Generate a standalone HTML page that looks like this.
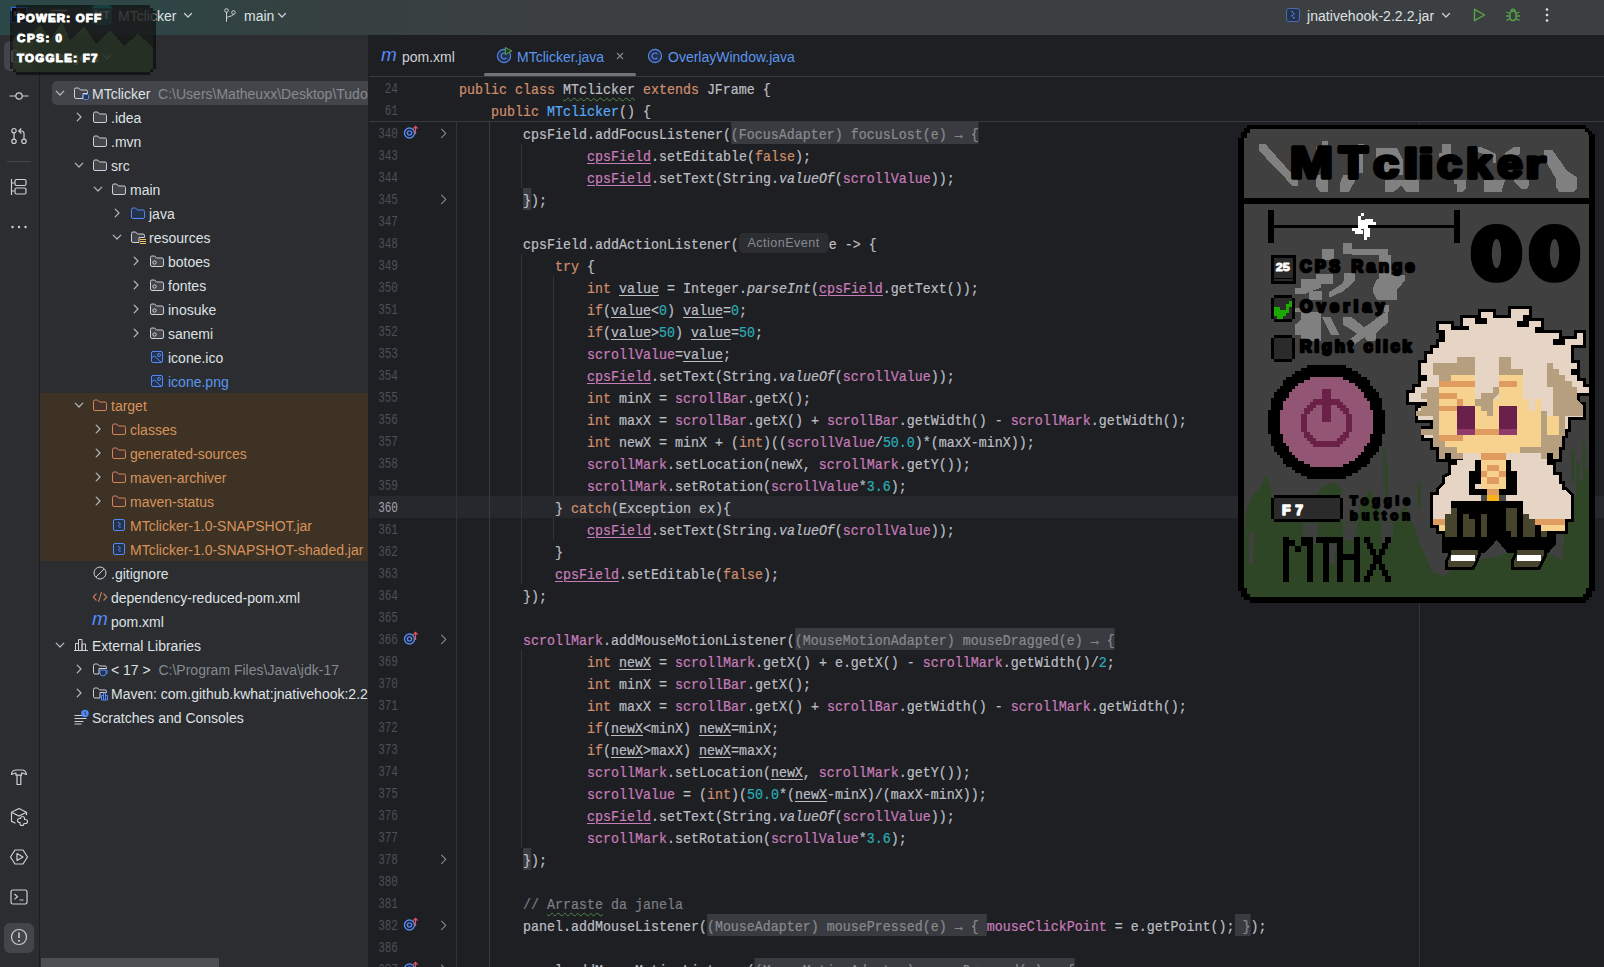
<!DOCTYPE html><html><head><meta charset="utf-8"><title>MTclicker</title><style>
*{margin:0;padding:0;box-sizing:border-box}
html,body{width:1604px;height:967px;overflow:hidden;background:#1e1f22}
body{position:relative;font-family:"Liberation Sans",sans-serif;font-size:14px;color:#dfe1e5}
.a{position:absolute}
#tb{left:0;top:0;width:1604px;height:35px;background:linear-gradient(90deg,#2c4848 0px,#2f4546 150px,#35403f 330px,#3c3f41 560px)}
#ts{left:0;top:35px;width:40px;height:932px;background:#2b2d30;border-right:1px solid #1e1f22}
#pp{left:40px;top:35px;width:329px;height:932px;background:#2b2d30;border-right:1px solid #1e1f22;overflow:hidden}
#ed{left:369px;top:35px;width:1235px;height:932px;background:#1e1f22;overflow:hidden}
.t{position:absolute;white-space:pre;line-height:24px;height:24px;margin-top:.5px}
.row{position:absolute;left:0;width:329px;height:24px}
.code{font-family:"Liberation Mono",monospace;font-size:14.400px;color:#bcbec4;white-space:pre;position:absolute;line-height:22px;height:22px;margin-top:1.700px;-webkit-text-stroke:.22px;transform:scaleX(.9258);transform-origin:0 50%}
.ln{font-family:"Liberation Mono",monospace;font-size:13.800px;color:#4b5059;position:absolute;width:60px;text-align:right;line-height:22px;height:22px;left:-31px;transform:scaleX(.8);transform-origin:100% 50%;margin-top:1.800px}
.k{color:#cf8e6d}.f{color:#c77dbb}.n{color:#2aacb8}.m{color:#56a8f5}.c{color:#7a7e85}
.u{text-decoration:underline;text-underline-offset:2px;text-decoration-thickness:1px}
.i{font-style:italic}
.h{background:#393b40;color:#868a91;display:inline-block;height:22px;margin-top:-1.5px;padding-top:1.5px;vertical-align:top}
.b{background:#393b40;display:inline-block;height:22px;margin-top:-1.5px;padding-top:1.5px;vertical-align:top}
.w{text-decoration:underline wavy #4d8a4a;text-decoration-thickness:1px;text-underline-offset:3px}
.ih{font-family:"Liberation Sans",sans-serif;font-size:13.600px;color:#868a91;background:#2b2d30;border-radius:5px;display:inline-block;height:20px;line-height:19px;vertical-align:top;margin-top:-0.500px;width:96.700px;text-align:center;margin-right:0.500px;-webkit-text-stroke:0;letter-spacing:.5px}
</style></head><body>
<div id="tb" class="a">
<div class="a" style="left:11px;top:7px;width:16px;height:16px;border:1px solid #2f6bd8;background:#0d0f14"></div>
<div class="a" style="left:14px;top:10px;width:5px;height:7px;color:#fff;font:bold 7px/7px 'Liberation Sans',sans-serif">IJ</div>
<svg class="a" style="left:50px;top:7px" width="18" height="16" viewBox="0 0 18 16" fill="none"><path d="M1 3.500h16M1 8.500h16M1 13.500h16" stroke="#ced0d6" stroke-width="1.300"/></svg>
<div class="a" style="left:92px;top:5px;width:20px;height:20px;border-radius:4px;background:linear-gradient(135deg,#3a8f8c,#2f7f86);color:#fff;font:bold 10.500px/20px 'Liberation Sans',sans-serif;text-align:center;letter-spacing:0.300px">MT</div>
<div class="t" style="left:118px;top:3px;color:#dfe1e5">MTclicker</div>
<svg class="a" style="left:180px;top:7px" width="16" height="16" viewBox="0 0 16 16" fill="none"><path d="M4.500 6.500l3.500 3.500 3.500-3.500" stroke="#ced0d6" stroke-width="1.200" stroke-linecap="round" stroke-linejoin="round"/></svg>
<svg class="a" style="left:222px;top:7px" width="16" height="16" viewBox="0 0 16 16" fill="none"><circle cx="4.500" cy="3.500" r="1.800" stroke="#ced0d6"/><circle cx="11.500" cy="5.500" r="1.800" stroke="#ced0d6"/><path d="M4.500 5.300v9M4.500 11.500c0-3 7-1.500 7-4.200" stroke="#ced0d6" stroke-linecap="round"/></svg>
<div class="t" style="left:244px;top:3px;color:#dfe1e5">main</div>
<svg class="a" style="left:274px;top:7px" width="16" height="16" viewBox="0 0 16 16" fill="none"><path d="M4.500 6.500l3.500 3.500 3.500-3.500" stroke="#ced0d6" stroke-width="1.200" stroke-linecap="round" stroke-linejoin="round"/></svg>
<svg class="a" style="left:1285px;top:7px" width="16" height="16" viewBox="0 0 16 16" fill="none"><rect x="1.500" y="1.500" width="13" height="13" rx="2.500" stroke="#4a6bb0" fill="#25324d"/><path d="M6.500 4h1.500v1.500h-1.500zM8 6h1.500v1.500H8zM6.500 8h1.500v1.500h-1.500zM8 10h1.500v1.500H8z" fill="#548af7"/></svg>
<div class="t" style="left:1307px;top:3px;color:#dfe1e5;letter-spacing:0.050px">jnativehook-2.2.2.jar</div>
<svg class="a" style="left:1438px;top:7px" width="16" height="16" viewBox="0 0 16 16" fill="none"><path d="M4.500 6.500l3.500 3.500 3.500-3.500" stroke="#ced0d6" stroke-width="1.200" stroke-linecap="round" stroke-linejoin="round"/></svg>
<svg class="a" style="left:1471px;top:7px" width="16" height="16" viewBox="0 0 16 16" fill="none"><path d="M3.500 2.300l10 5.700-10 5.700z" stroke="#57a64a" stroke-width="1.400" stroke-linejoin="round"/></svg>
<svg class="a" style="left:1505px;top:7px" width="16" height="16" viewBox="0 0 16 16" fill="none"><rect x="5" y="4" width="6" height="9.500" rx="3" stroke="#57a64a" stroke-width="1.300"/><path d="M6 4.200a2 2 0 0 1 4 0M1.500 5l3.300 1.500M14.500 5l-3.300 1.500M1 9h4M15 9h-4M1.500 13.500l3.500-2M14.500 13.500l-3.500-2" stroke="#57a64a" stroke-width="1.300"/></svg>
<svg class="a" style="left:1539px;top:7px" width="16" height="16" viewBox="0 0 16 16" fill="none"><circle cx="8" cy="2.500" r="1.300" fill="#dfe1e5"/><circle cx="8" cy="8" r="1.300" fill="#dfe1e5"/><circle cx="8" cy="13.500" r="1.300" fill="#dfe1e5"/></svg>
</div>
<div id="ts" class="a">
<div class="a" style="left:4px;top:6px;width:30px;height:30px;border-radius:6px;background:#43454a"></div>
<svg class="a" style="left:9px;top:11px" width="20" height="20" viewBox="0 0 20 20" fill="none" stroke="#ced0d6" stroke-width="1.200"><path d="M3 6a1.500 1.500 0 0 1 1.500-1.500h3l2 2.200h6a1.500 1.500 0 0 1 1.500 1.500v6.300a1.500 1.500 0 0 1-1.500 1.500h-11a1.500 1.500 0 0 1-1.500-1.500z"/></svg>
<svg class="a" style="left:9px;top:51px" width="20" height="20" viewBox="0 0 20 20" fill="none" stroke="#ced0d6" stroke-width="1.200"><circle cx="10" cy="10" r="3.200"/><path d="M0.500 10h6.300M13.200 10h6.300"/></svg>
<svg class="a" style="left:9px;top:91px" width="20" height="20" viewBox="0 0 20 20" fill="none" stroke="#ced0d6" stroke-width="1.200"><circle cx="5" cy="4.700" r="2.200"/><circle cx="5" cy="15.300" r="2.200"/><circle cx="15" cy="15.300" r="2.200"/><path d="M5 7v6M15 13v-5.500a2.500 2.500 0 0 0-2.500-2.500h-2.500M12.300 2.500l-2.500 2.500 2.500 2.500"/></svg>
<div class="a" style="left:7px;top:126px;width:24px;height:1px;background:#43454a"></div>
<svg class="a" style="left:9px;top:142px" width="20" height="20" viewBox="0 0 20 20" fill="none" stroke="#ced0d6" stroke-width="1.200"><path d="M2.500 2v16M2.500 6h3M2.500 14h3"/><rect x="6" y="2.500" width="11" height="6" rx="1.500"/><rect x="6" y="11" width="11" height="6" rx="1.500"/></svg>
<svg class="a" style="left:9px;top:182px" width="20" height="20" viewBox="0 0 20 20" fill="none" stroke="#ced0d6" stroke-width="1.200"><circle cx="3.500" cy="10" r="1.200" fill="#ced0d6" stroke="none"/><circle cx="10" cy="10" r="1.200" fill="#ced0d6" stroke="none"/><circle cx="16.500" cy="10" r="1.200" fill="#ced0d6" stroke="none"/></svg>
<svg class="a" style="left:9px;top:732px" width="20" height="20" viewBox="0 0 20 20" fill="none" stroke="#ced0d6" stroke-width="1.200"><path d="M2.500 7.500c0-2.800 2-4.500 5-4.500h5.500c2.500 0 4 1.800 4.500 4.500l-3.500-1.300h-1.500v2h-5.500v-2h-1.300z M8 8.200v9.300h3.800v-9.300" stroke-linejoin="round"/></svg>
<svg class="a" style="left:9px;top:772px" width="20" height="20" viewBox="0 0 20 20" fill="none" stroke="#ced0d6" stroke-width="1.200"><path d="M10 1.500l7.500 3.800v3M10 1.500l-7.500 3.800v9l4 2M2.500 5.300l7.500 3.700 7.500-3.700"/><path d="M13.500 9.500a2 2 0 0 1 2 2v1h1a2 2 0 0 1 0 4h-1.500a2 2 0 0 1-2 2 2 2 0 0 1-2-2v-1h-0.500a2 2 0 0 1 0-4h1v-0.500a2 2 0 0 1 2-1.500z" stroke-width="1.100"/></svg>
<svg class="a" style="left:9px;top:812px" width="20" height="20" viewBox="0 0 20 20" fill="none" stroke="#ced0d6" stroke-width="1.200"><path d="M6 3h8l4.500 7-4.500 7h-8l-4.500-7z M8 6.500l6 3.500-6 3.500z" stroke-linejoin="round"/></svg>
<svg class="a" style="left:9px;top:852px" width="20" height="20" viewBox="0 0 20 20" fill="none" stroke="#ced0d6" stroke-width="1.200"><rect x="2" y="3" width="16" height="14" rx="1.800"/><path d="M5.500 7l3 2.700-3 2.700M10.500 13h4"/></svg>
<div class="a" style="left:4px;top:888px;width:30px;height:30px;border-radius:6px;background:#43454a"></div>
<svg class="a" style="left:9px;top:892px" width="20" height="20" viewBox="0 0 20 20" fill="none" stroke="#ced0d6" stroke-width="1.200"><circle cx="10" cy="10" r="7.500"/><path d="M10 5.500v5.500" stroke-width="1.500"/><circle cx="10" cy="13.800" r="1" fill="#ced0d6" stroke="none"/></svg>
</div>
<div id="pp" class="a">
<div class="t" style="left:13px;top:10px;font-weight:bold;color:#dfe1e5;font-size:13.500px">Project</div>
<div class="a" style="left:59px;top:14px;width:16px;height:16px"><svg width="16" height="16" viewBox="0 0 16 16" fill="none" style="position:absolute;left:0;top:0"><path d="M4.200 6.200l3.800 3.800 3.800-3.800" stroke="#b4b8bf" stroke-width="1.200" stroke-linecap="round" stroke-linejoin="round"/></svg></div>
<div class="a" style="left:0;top:358px;width:329px;height:168px;background:#3d3223"></div>
<div class="a" style="left:12px;top:46px;width:330px;height:24px;background:#43454a;border-radius:5px"></div>
<div class="a" style="left:12px;top:50px;width:16px;height:16px"><svg width="16" height="16" viewBox="0 0 16 16" fill="none" style="position:absolute;left:0;top:0"><path d="M4.200 6.200l3.800 3.800 3.800-3.800" stroke="#b4b8bf" stroke-width="1.200" stroke-linecap="round" stroke-linejoin="round"/></svg></div>
<div class="a" style="left:33px;top:50px;width:17px;height:17px"><svg width="16" height="16" viewBox="0 0 16 16" fill="none" style="position:absolute;left:0;top:0"><path d="M1.5 4.5a1.5 1.5 0 0 1 1.5-1.5h2.6l1.9 2h5.5a1.5 1.5 0 0 1 1.5 1.5v2h-4.5v5h-7a1.5 1.5 0 0 1-1.5-1.5z" stroke="#ced0d6" fill="#43454a"/><rect x="10.5" y="9.5" width="5" height="5" rx="1.2" stroke="#548af7" fill="#25324d"/></svg></div>
<div class="t" style="left:52px;top:46px;color:#dfe1e5;">MTclicker<span style="color:#868a91">  C:\Users\Matheuxx\Desktop\Tudo\</span></div>
<div class="a" style="left:31px;top:74px;width:16px;height:16px"><svg width="16" height="16" viewBox="0 0 16 16" fill="none" style="position:absolute;left:0;top:0"><path d="M6.200 4.200l3.800 3.800-3.800 3.800" stroke="#b4b8bf" stroke-width="1.200" stroke-linecap="round" stroke-linejoin="round"/></svg></div>
<div class="a" style="left:52px;top:74px;width:17px;height:17px"><svg width="16" height="16" viewBox="0 0 16 16" fill="none" style="position:absolute;left:0;top:0"><path d="M1.5 4.5a1.5 1.5 0 0 1 1.5-1.5h2.6l1.9 2h5.5a1.5 1.5 0 0 1 1.5 1.5v5.5a1.5 1.5 0 0 1-1.5 1.5h-10a1.5 1.5 0 0 1-1.5-1.5z" stroke="#ced0d6" fill="#43454a" stroke-width="1"/></svg></div>
<div class="t" style="left:71px;top:70px;">.idea</div>
<div class="a" style="left:52px;top:98px;width:17px;height:17px"><svg width="16" height="16" viewBox="0 0 16 16" fill="none" style="position:absolute;left:0;top:0"><path d="M1.5 4.5a1.5 1.5 0 0 1 1.5-1.5h2.6l1.9 2h5.5a1.5 1.5 0 0 1 1.5 1.5v5.5a1.5 1.5 0 0 1-1.5 1.5h-10a1.5 1.5 0 0 1-1.5-1.5z" stroke="#ced0d6" fill="#43454a" stroke-width="1"/></svg></div>
<div class="t" style="left:71px;top:94px;">.mvn</div>
<div class="a" style="left:31px;top:122px;width:16px;height:16px"><svg width="16" height="16" viewBox="0 0 16 16" fill="none" style="position:absolute;left:0;top:0"><path d="M4.200 6.200l3.800 3.800 3.800-3.800" stroke="#b4b8bf" stroke-width="1.200" stroke-linecap="round" stroke-linejoin="round"/></svg></div>
<div class="a" style="left:52px;top:122px;width:17px;height:17px"><svg width="16" height="16" viewBox="0 0 16 16" fill="none" style="position:absolute;left:0;top:0"><path d="M1.5 4.5a1.5 1.5 0 0 1 1.5-1.5h2.6l1.9 2h5.5a1.5 1.5 0 0 1 1.5 1.5v5.5a1.5 1.5 0 0 1-1.5 1.5h-10a1.5 1.5 0 0 1-1.5-1.5z" stroke="#ced0d6" fill="#43454a" stroke-width="1"/></svg></div>
<div class="t" style="left:71px;top:118px;">src</div>
<div class="a" style="left:50px;top:146px;width:16px;height:16px"><svg width="16" height="16" viewBox="0 0 16 16" fill="none" style="position:absolute;left:0;top:0"><path d="M4.200 6.200l3.800 3.800 3.800-3.800" stroke="#b4b8bf" stroke-width="1.200" stroke-linecap="round" stroke-linejoin="round"/></svg></div>
<div class="a" style="left:71px;top:146px;width:17px;height:17px"><svg width="16" height="16" viewBox="0 0 16 16" fill="none" style="position:absolute;left:0;top:0"><path d="M1.5 4.5a1.5 1.5 0 0 1 1.5-1.5h2.6l1.9 2h5.5a1.5 1.5 0 0 1 1.5 1.5v5.5a1.5 1.5 0 0 1-1.5 1.5h-10a1.5 1.5 0 0 1-1.5-1.5z" stroke="#ced0d6" fill="#43454a" stroke-width="1"/></svg></div>
<div class="t" style="left:90px;top:142px;">main</div>
<div class="a" style="left:69px;top:170px;width:16px;height:16px"><svg width="16" height="16" viewBox="0 0 16 16" fill="none" style="position:absolute;left:0;top:0"><path d="M6.200 4.200l3.800 3.800-3.800 3.800" stroke="#b4b8bf" stroke-width="1.200" stroke-linecap="round" stroke-linejoin="round"/></svg></div>
<div class="a" style="left:90px;top:170px;width:17px;height:17px"><svg width="16" height="16" viewBox="0 0 16 16" fill="none" style="position:absolute;left:0;top:0"><path d="M1.5 4.5a1.5 1.5 0 0 1 1.5-1.5h2.6l1.9 2h5.5a1.5 1.5 0 0 1 1.5 1.5v5.5a1.5 1.5 0 0 1-1.5 1.5h-10a1.5 1.5 0 0 1-1.5-1.5z" stroke="#548af7" fill="#25324d" stroke-width="1"/></svg></div>
<div class="t" style="left:109px;top:166px;">java</div>
<div class="a" style="left:69px;top:194px;width:16px;height:16px"><svg width="16" height="16" viewBox="0 0 16 16" fill="none" style="position:absolute;left:0;top:0"><path d="M4.200 6.200l3.800 3.800 3.800-3.800" stroke="#b4b8bf" stroke-width="1.200" stroke-linecap="round" stroke-linejoin="round"/></svg></div>
<div class="a" style="left:90px;top:194px;width:17px;height:17px"><svg width="16" height="16" viewBox="0 0 16 16" fill="none" style="position:absolute;left:0;top:0"><path d="M1.5 4.5a1.5 1.5 0 0 1 1.5-1.5h2.6l1.9 2h5.5a1.5 1.5 0 0 1 1.5 1.5v2h-5.5v5h-6a1.5 1.5 0 0 1-1.5-1.5z" stroke="#ced0d6" fill="#43454a"/><path d="M10 10.5h6M10 12.5h6M10 14.5h6" stroke="#f2c55c" stroke-width="1"/></svg></div>
<div class="t" style="left:109px;top:190px;">resources</div>
<div class="a" style="left:88px;top:218px;width:16px;height:16px"><svg width="16" height="16" viewBox="0 0 16 16" fill="none" style="position:absolute;left:0;top:0"><path d="M6.200 4.200l3.800 3.800-3.800 3.800" stroke="#b4b8bf" stroke-width="1.200" stroke-linecap="round" stroke-linejoin="round"/></svg></div>
<div class="a" style="left:109px;top:218px;width:17px;height:17px"><svg width="16" height="16" viewBox="0 0 16 16" fill="none" style="position:absolute;left:0;top:0"><path d="M1.5 4.5a1.5 1.5 0 0 1 1.5-1.5h2.6l1.9 2h5.5a1.5 1.5 0 0 1 1.5 1.5v5.5a1.5 1.5 0 0 1-1.5 1.5h-10a1.5 1.5 0 0 1-1.5-1.5z" stroke="#ced0d6" fill="#43454a" stroke-width="1"/><circle cx="5.5" cy="9.5" r="1.7" stroke="#ced0d6"/></svg></div>
<div class="t" style="left:128px;top:214px;">botoes</div>
<div class="a" style="left:88px;top:242px;width:16px;height:16px"><svg width="16" height="16" viewBox="0 0 16 16" fill="none" style="position:absolute;left:0;top:0"><path d="M6.200 4.200l3.800 3.800-3.800 3.800" stroke="#b4b8bf" stroke-width="1.200" stroke-linecap="round" stroke-linejoin="round"/></svg></div>
<div class="a" style="left:109px;top:242px;width:17px;height:17px"><svg width="16" height="16" viewBox="0 0 16 16" fill="none" style="position:absolute;left:0;top:0"><path d="M1.5 4.5a1.5 1.5 0 0 1 1.5-1.5h2.6l1.9 2h5.5a1.5 1.5 0 0 1 1.5 1.5v5.5a1.5 1.5 0 0 1-1.5 1.5h-10a1.5 1.5 0 0 1-1.5-1.5z" stroke="#ced0d6" fill="#43454a" stroke-width="1"/><circle cx="5.5" cy="9.5" r="1.7" stroke="#ced0d6"/></svg></div>
<div class="t" style="left:128px;top:238px;">fontes</div>
<div class="a" style="left:88px;top:266px;width:16px;height:16px"><svg width="16" height="16" viewBox="0 0 16 16" fill="none" style="position:absolute;left:0;top:0"><path d="M6.200 4.200l3.800 3.800-3.800 3.800" stroke="#b4b8bf" stroke-width="1.200" stroke-linecap="round" stroke-linejoin="round"/></svg></div>
<div class="a" style="left:109px;top:266px;width:17px;height:17px"><svg width="16" height="16" viewBox="0 0 16 16" fill="none" style="position:absolute;left:0;top:0"><path d="M1.5 4.5a1.5 1.5 0 0 1 1.5-1.5h2.6l1.9 2h5.5a1.5 1.5 0 0 1 1.5 1.5v5.5a1.5 1.5 0 0 1-1.5 1.5h-10a1.5 1.5 0 0 1-1.5-1.5z" stroke="#ced0d6" fill="#43454a" stroke-width="1"/><circle cx="5.5" cy="9.5" r="1.7" stroke="#ced0d6"/></svg></div>
<div class="t" style="left:128px;top:262px;">inosuke</div>
<div class="a" style="left:88px;top:290px;width:16px;height:16px"><svg width="16" height="16" viewBox="0 0 16 16" fill="none" style="position:absolute;left:0;top:0"><path d="M6.200 4.200l3.800 3.800-3.800 3.800" stroke="#b4b8bf" stroke-width="1.200" stroke-linecap="round" stroke-linejoin="round"/></svg></div>
<div class="a" style="left:109px;top:290px;width:17px;height:17px"><svg width="16" height="16" viewBox="0 0 16 16" fill="none" style="position:absolute;left:0;top:0"><path d="M1.5 4.5a1.5 1.5 0 0 1 1.5-1.5h2.6l1.9 2h5.5a1.5 1.5 0 0 1 1.5 1.5v5.5a1.5 1.5 0 0 1-1.5 1.5h-10a1.5 1.5 0 0 1-1.5-1.5z" stroke="#ced0d6" fill="#43454a" stroke-width="1"/><circle cx="5.5" cy="9.5" r="1.7" stroke="#ced0d6"/></svg></div>
<div class="t" style="left:128px;top:286px;">sanemi</div>
<div class="a" style="left:109px;top:314px;width:17px;height:17px"><svg width="16" height="16" viewBox="0 0 16 16" fill="none" style="position:absolute;left:0;top:0"><rect x="2.5" y="2.5" width="11" height="11" rx="1.5" stroke="#548af7" fill="#25324d"/><circle cx="10" cy="6" r="1.5" stroke="#548af7"/><path d="M2.5 8.5l3-1.5 7 6.5" stroke="#548af7"/></svg></div>
<div class="t" style="left:128px;top:310px;">icone.ico</div>
<div class="a" style="left:109px;top:338px;width:17px;height:17px"><svg width="16" height="16" viewBox="0 0 16 16" fill="none" style="position:absolute;left:0;top:0"><rect x="2.5" y="2.5" width="11" height="11" rx="1.5" stroke="#548af7" fill="#25324d"/><circle cx="10" cy="6" r="1.5" stroke="#548af7"/><path d="M2.5 8.5l3-1.5 7 6.5" stroke="#548af7"/></svg></div>
<div class="t" style="left:128px;top:334px;color:#5a96ee;">icone.png</div>
<div class="a" style="left:31px;top:362px;width:16px;height:16px"><svg width="16" height="16" viewBox="0 0 16 16" fill="none" style="position:absolute;left:0;top:0"><path d="M4.200 6.200l3.800 3.800 3.800-3.800" stroke="#b4b8bf" stroke-width="1.200" stroke-linecap="round" stroke-linejoin="round"/></svg></div>
<div class="a" style="left:52px;top:362px;width:17px;height:17px"><svg width="16" height="16" viewBox="0 0 16 16" fill="none" style="position:absolute;left:0;top:0"><path d="M1.5 4.5a1.5 1.5 0 0 1 1.5-1.5h2.6l1.9 2h5.5a1.5 1.5 0 0 1 1.5 1.5v5.5a1.5 1.5 0 0 1-1.5 1.5h-10a1.5 1.5 0 0 1-1.5-1.5z" stroke="#d3855a" fill="#45302b" stroke-width="1"/></svg></div>
<div class="t" style="left:71px;top:358px;color:#d8925e;">target</div>
<div class="a" style="left:50px;top:386px;width:16px;height:16px"><svg width="16" height="16" viewBox="0 0 16 16" fill="none" style="position:absolute;left:0;top:0"><path d="M6.200 4.200l3.800 3.800-3.800 3.800" stroke="#b4b8bf" stroke-width="1.200" stroke-linecap="round" stroke-linejoin="round"/></svg></div>
<div class="a" style="left:71px;top:386px;width:17px;height:17px"><svg width="16" height="16" viewBox="0 0 16 16" fill="none" style="position:absolute;left:0;top:0"><path d="M1.5 4.5a1.5 1.5 0 0 1 1.5-1.5h2.6l1.9 2h5.5a1.5 1.5 0 0 1 1.5 1.5v5.5a1.5 1.5 0 0 1-1.5 1.5h-10a1.5 1.5 0 0 1-1.5-1.5z" stroke="#d3855a" fill="#45302b" stroke-width="1"/></svg></div>
<div class="t" style="left:90px;top:382px;color:#d8925e;">classes</div>
<div class="a" style="left:50px;top:410px;width:16px;height:16px"><svg width="16" height="16" viewBox="0 0 16 16" fill="none" style="position:absolute;left:0;top:0"><path d="M6.200 4.200l3.800 3.800-3.800 3.800" stroke="#b4b8bf" stroke-width="1.200" stroke-linecap="round" stroke-linejoin="round"/></svg></div>
<div class="a" style="left:71px;top:410px;width:17px;height:17px"><svg width="16" height="16" viewBox="0 0 16 16" fill="none" style="position:absolute;left:0;top:0"><path d="M1.5 4.5a1.5 1.5 0 0 1 1.5-1.5h2.6l1.9 2h5.5a1.5 1.5 0 0 1 1.5 1.5v5.5a1.5 1.5 0 0 1-1.5 1.5h-10a1.5 1.5 0 0 1-1.5-1.5z" stroke="#d3855a" fill="#45302b" stroke-width="1"/></svg></div>
<div class="t" style="left:90px;top:406px;color:#d8925e;">generated-sources</div>
<div class="a" style="left:50px;top:434px;width:16px;height:16px"><svg width="16" height="16" viewBox="0 0 16 16" fill="none" style="position:absolute;left:0;top:0"><path d="M6.200 4.200l3.800 3.800-3.800 3.800" stroke="#b4b8bf" stroke-width="1.200" stroke-linecap="round" stroke-linejoin="round"/></svg></div>
<div class="a" style="left:71px;top:434px;width:17px;height:17px"><svg width="16" height="16" viewBox="0 0 16 16" fill="none" style="position:absolute;left:0;top:0"><path d="M1.5 4.5a1.5 1.5 0 0 1 1.5-1.5h2.6l1.9 2h5.5a1.5 1.5 0 0 1 1.5 1.5v5.5a1.5 1.5 0 0 1-1.5 1.5h-10a1.5 1.5 0 0 1-1.5-1.5z" stroke="#d3855a" fill="#45302b" stroke-width="1"/></svg></div>
<div class="t" style="left:90px;top:430px;color:#d8925e;">maven-archiver</div>
<div class="a" style="left:50px;top:458px;width:16px;height:16px"><svg width="16" height="16" viewBox="0 0 16 16" fill="none" style="position:absolute;left:0;top:0"><path d="M6.200 4.200l3.800 3.800-3.800 3.800" stroke="#b4b8bf" stroke-width="1.200" stroke-linecap="round" stroke-linejoin="round"/></svg></div>
<div class="a" style="left:71px;top:458px;width:17px;height:17px"><svg width="16" height="16" viewBox="0 0 16 16" fill="none" style="position:absolute;left:0;top:0"><path d="M1.5 4.5a1.5 1.5 0 0 1 1.5-1.5h2.6l1.9 2h5.5a1.5 1.5 0 0 1 1.5 1.5v5.5a1.5 1.5 0 0 1-1.5 1.5h-10a1.5 1.5 0 0 1-1.5-1.5z" stroke="#d3855a" fill="#45302b" stroke-width="1"/></svg></div>
<div class="t" style="left:90px;top:454px;color:#d8925e;">maven-status</div>
<div class="a" style="left:71px;top:482px;width:17px;height:17px"><svg width="16" height="16" viewBox="0 0 16 16" fill="none" style="position:absolute;left:0;top:0"><rect x="2.5" y="2.5" width="11" height="11" rx="1.5" stroke="#548af7" fill="#25324d"/><path d="M7 5h1.3v1.3H7zM8.3 6.6h1.3v1.3H8.3zM7 8.2h1.3v1.3H7zM8.3 9.8h1.3v1.3H8.3z" fill="#548af7"/></svg></div>
<div class="t" style="left:90px;top:478px;color:#d8925e;">MTclicker-1.0-SNAPSHOT.jar</div>
<div class="a" style="left:71px;top:506px;width:17px;height:17px"><svg width="16" height="16" viewBox="0 0 16 16" fill="none" style="position:absolute;left:0;top:0"><rect x="2.5" y="2.5" width="11" height="11" rx="1.5" stroke="#548af7" fill="#25324d"/><path d="M7 5h1.3v1.3H7zM8.3 6.6h1.3v1.3H8.3zM7 8.2h1.3v1.3H7zM8.3 9.8h1.3v1.3H8.3z" fill="#548af7"/></svg></div>
<div class="t" style="left:90px;top:502px;color:#d8925e;">MTclicker-1.0-SNAPSHOT-shaded.jar</div>
<div class="a" style="left:52px;top:530px;width:17px;height:17px"><svg width="16" height="16" viewBox="0 0 16 16" fill="none" style="position:absolute;left:0;top:0"><circle cx="8" cy="8" r="6" stroke="#ced0d6"/><path d="M4 12L12 4" stroke="#ced0d6"/></svg></div>
<div class="t" style="left:71px;top:526px;">.gitignore</div>
<div class="a" style="left:52px;top:554px;width:17px;height:17px"><svg width="16" height="16" viewBox="0 0 16 16" fill="none" style="position:absolute;left:0;top:0"><path d="M4.5 4.5L1.2 8l3.3 3.5M11.5 4.5L14.8 8l-3.3 3.5M9.6 3L6.4 13" stroke="#c77d55" stroke-width="1.1"/></svg></div>
<div class="t" style="left:71px;top:550px;">dependency-reduced-pom.xml</div>
<div class="a" style="left:52px;top:578px;width:17px;height:17px"><span style="position:absolute;left:0;top:-6px;font:italic 19px/24px 'Liberation Sans',sans-serif;color:#548af7">m</span></div>
<div class="t" style="left:71px;top:574px;">pom.xml</div>
<div class="a" style="left:12px;top:602px;width:16px;height:16px"><svg width="16" height="16" viewBox="0 0 16 16" fill="none" style="position:absolute;left:0;top:0"><path d="M4.200 6.200l3.800 3.800 3.800-3.800" stroke="#b4b8bf" stroke-width="1.200" stroke-linecap="round" stroke-linejoin="round"/></svg></div>
<div class="a" style="left:33px;top:602px;width:17px;height:17px"><svg width="16" height="16" viewBox="0 0 16 16" fill="none" style="position:absolute;left:0;top:0"><path d="M2.5 13.5v-7h3v7zM5.5 13.5v-11h3.5v11zM9 13.5v-6.500h3.5v6.5zM1 13.5h14" stroke="#ced0d6"/></svg></div>
<div class="t" style="left:52px;top:598px;">External Libraries</div>
<div class="a" style="left:31px;top:626px;width:16px;height:16px"><svg width="16" height="16" viewBox="0 0 16 16" fill="none" style="position:absolute;left:0;top:0"><path d="M6.200 4.200l3.800 3.800-3.800 3.800" stroke="#b4b8bf" stroke-width="1.200" stroke-linecap="round" stroke-linejoin="round"/></svg></div>
<div class="a" style="left:52px;top:626px;width:17px;height:17px"><svg width="16" height="16" viewBox="0 0 16 16" fill="none" style="position:absolute;left:0;top:0"><path d="M1.5 4.500a1.5 1.5 0 0 1 1.5-1.5h2.6l1.9 2h5.5a1.5 1.5 0 0 1 1.5 1.5v1h-7.5v5.5h-4a1.5 1.5 0 0 1-1.5-1.500z" stroke="#ced0d6"/><path d="M8 9h6v3a3 3 0 0 1-6 0zM14 9.800h1.200a1 1 0 0 1 0 2.400h-1.200" stroke="#548af7" fill="#25324d"/></svg></div>
<div class="t" style="left:71px;top:622px;">&lt; 17 &gt;<span style="color:#868a91">  C:\Program Files\Java\jdk-17</span></div>
<div class="a" style="left:31px;top:650px;width:16px;height:16px"><svg width="16" height="16" viewBox="0 0 16 16" fill="none" style="position:absolute;left:0;top:0"><path d="M6.200 4.200l3.800 3.800-3.800 3.800" stroke="#b4b8bf" stroke-width="1.200" stroke-linecap="round" stroke-linejoin="round"/></svg></div>
<div class="a" style="left:52px;top:650px;width:17px;height:17px"><svg width="16" height="16" viewBox="0 0 16 16" fill="none" style="position:absolute;left:0;top:0"><path d="M1.5 4.500a1.5 1.5 0 0 1 1.5-1.5h2.6l1.9 2h5.5a1.5 1.5 0 0 1 1.5 1.5v1h-6.500v5.5h-5a1.500 1.500 0 0 1-1.500-1.500z" stroke="#ced0d6"/><path d="M9.5 15v-4.500h2v4.500zM11.500 15v-7h2v7zM13.500 15v-4.500h2v4.500z" stroke="#548af7" fill="#25324d"/></svg></div>
<div class="t" style="left:71px;top:646px;">Maven: com.github.kwhat:jnativehook:2.2.2</div>
<div class="a" style="left:33px;top:674px;width:17px;height:17px"><svg width="17" height="17" viewBox="0 0 17 17" fill="none" style="position:absolute;left:0;top:0"><path d="M1.500 6.500h8M1.500 9.500h12M1.500 12.500h9M1.500 15h7" stroke="#ced0d6" stroke-width="1.200"/><circle cx="12" cy="4.500" r="3.700" fill="#548af7"/><path d="M12 2.500v2.300l1.500 0.900" stroke="#2b2d30" stroke-width="1"/></svg></div>
<div class="t" style="left:52px;top:670px;">Scratches and Consoles</div>
<div class="a" style="left:1px;top:923px;width:178px;height:9px;background:#4d4e51"></div>
</div>
<div id="ed" class="a">
<div class="a" style="left:0;top:41px;width:1235px;height:1px;background:#393b40"></div>
<span class="a" style="left:12px;top:8px;font:italic 19px/24px 'Liberation Sans',sans-serif;color:#548af7">m</span>
<div class="t" style="left:33px;top:9px;color:#ced0d6">pom.xml</div>
<svg class="a" style="left:126px;top:12px" width="18" height="18" viewBox="0 0 18 18" fill="none"><circle cx="9" cy="9" r="6.600" stroke="#548af7" fill="#25324d" stroke-width="1.100"/><path d="M11.300 7a3 3 0 1 0 0 4" stroke="#548af7" stroke-width="1.200"/><path d="M10.300 0.500l6.500 3.500-6.500 3.500z" fill="#253627" stroke="#57a64a" stroke-width="1"/></svg>
<div class="t" style="left:148px;top:9px;color:#5a96ee">MTclicker.java</div>
<svg class="a" style="left:243px;top:13px" width="16" height="16" viewBox="0 0 16 16" fill="none"><path d="M5 5l6 6M11 5l-6 6" stroke="#868a91" stroke-width="1.100"/></svg>
<div class="a" style="left:115px;top:38px;width:152px;height:3px;background:#6f737a;border-radius:1.500px"></div>
<svg class="a" style="left:277px;top:12px" width="18" height="18" viewBox="0 0 18 18" fill="none"><circle cx="9" cy="9" r="6.600" stroke="#548af7" fill="#25324d" stroke-width="1.100"/><path d="M11.300 7a3 3 0 1 0 0 4" stroke="#548af7" stroke-width="1.200"/></svg>
<div class="t" style="left:299px;top:9px;color:#5a96ee">OverlayWindow.java</div>
<div class="ln" style="top:42px;">24</div>
<div class="code" style="left:90.0px;top:42px"><span class="k">public class</span> <span class="w">MTclicker</span> <span class="k">extends</span> JFrame {</div>
<div class="ln" style="top:64px;">61</div>
<div class="code" style="left:122.0px;top:64px"><span class="k">public</span> <span class="m">MTclicker</span>() {</div>
<div class="a" style="left:0;top:86px;width:1235px;height:1px;background:#393b40"></div>
<div class="a" style="left:0;top:461px;width:1235px;height:22px;background:#26282e"></div>
<div class="a" style="left:87px;top:87px;width:1px;height:900px;background:#313438"></div>
<div class="a" style="left:120px;top:87px;width:1px;height:900px;background:#393b40"></div>
<div class="a" style="left:1050px;top:87px;width:1px;height:900px;background:#313438"></div>
<div class="a" style="left:152px;top:109px;width:1px;height:44px;background:#313438"></div>
<div class="a" style="left:152px;top:219px;width:1px;height:330px;background:#313438"></div>
<div class="a" style="left:184px;top:241px;width:1px;height:220px;background:#313438"></div>
<div class="a" style="left:184px;top:483px;width:1px;height:22px;background:#313438"></div>
<div class="a" style="left:152px;top:615px;width:1px;height:198px;background:#313438"></div>
<div class="ln" style="top:87px;">340</div>
<div class="code" style="left:154.0px;top:87px">cpsField.addFocusListener(<span class="h">(FocusAdapter) focusLost(e) → {</span></div>
<svg class="a" style="left:32px;top:88.7px" width="20" height="16" viewBox="0 0 20 16" fill="none"><circle cx="8.500" cy="9" r="5" stroke="#548af7" stroke-width="1.400"/><circle cx="8.500" cy="9" r="2.100" stroke="#548af7" stroke-width="1.400"/><path d="M14.500 10v-7.500M12.300 4.700l2.200-2.300 2.200 2.300" stroke="#e05555" stroke-width="1.200"/></svg>
<svg class="a" style="left:66px;top:90px" width="16" height="16" viewBox="0 0 16 16" fill="none"><path d="M6.600 4.200l4.200 4.200-4.200 4.200" stroke="#868a91" stroke-width="1.100" stroke-linecap="round" stroke-linejoin="round"/></svg>
<div class="ln" style="top:109px;">343</div>
<div class="code" style="left:218.0px;top:109px"><span class="f u">cpsField</span>.setEditable(<span class="k">false</span>);</div>
<div class="ln" style="top:131px;">344</div>
<div class="code" style="left:218.0px;top:131px"><span class="f u">cpsField</span>.setText(String.<span class="i">valueOf</span>(<span class="f">scrollValue</span>));</div>
<div class="ln" style="top:153px;">345</div>
<div class="code" style="left:154.0px;top:153px"><span class="b">}</span>);</div>
<svg class="a" style="left:66px;top:156px" width="16" height="16" viewBox="0 0 16 16" fill="none"><path d="M6.600 4.200l4.200 4.200-4.200 4.200" stroke="#868a91" stroke-width="1.100" stroke-linecap="round" stroke-linejoin="round"/></svg>
<div class="ln" style="top:175px;">347</div>
<div class="ln" style="top:197px;">348</div>
<div class="code" style="left:154.0px;top:197px">cpsField.addActionListener(<span class="ih">ActionEvent</span>e -&gt; {</div>
<div class="ln" style="top:219px;">349</div>
<div class="code" style="left:186.0px;top:219px"><span class="k">try</span> {</div>
<div class="ln" style="top:241px;">350</div>
<div class="code" style="left:218.0px;top:241px"><span class="k">int</span> <span class="u">value</span> = Integer.<span class="i">parseInt</span>(<span class="f u">cpsField</span>.getText());</div>
<div class="ln" style="top:263px;">351</div>
<div class="code" style="left:218.0px;top:263px"><span class="k">if</span>(<span class="u">value</span>&lt;<span class="n">0</span>) <span class="u">value</span>=<span class="n">0</span>;</div>
<div class="ln" style="top:285px;">352</div>
<div class="code" style="left:218.0px;top:285px"><span class="k">if</span>(<span class="u">value</span>&gt;<span class="n">50</span>) <span class="u">value</span>=<span class="n">50</span>;</div>
<div class="ln" style="top:307px;">353</div>
<div class="code" style="left:218.0px;top:307px"><span class="f">scrollValue</span>=<span class="u">value</span>;</div>
<div class="ln" style="top:329px;">354</div>
<div class="code" style="left:218.0px;top:329px"><span class="f u">cpsField</span>.setText(String.<span class="i">valueOf</span>(<span class="f">scrollValue</span>));</div>
<div class="ln" style="top:351px;">355</div>
<div class="code" style="left:218.0px;top:351px"><span class="k">int</span> minX = <span class="f">scrollBar</span>.getX();</div>
<div class="ln" style="top:373px;">356</div>
<div class="code" style="left:218.0px;top:373px"><span class="k">int</span> maxX = <span class="f">scrollBar</span>.getX() + <span class="f">scrollBar</span>.getWidth() - <span class="f">scrollMark</span>.getWidth();</div>
<div class="ln" style="top:395px;">357</div>
<div class="code" style="left:218.0px;top:395px"><span class="k">int</span> newX = minX + (<span class="k">int</span>)((<span class="f">scrollValue</span>/<span class="n">50.0</span>)*(maxX-minX));</div>
<div class="ln" style="top:417px;">358</div>
<div class="code" style="left:218.0px;top:417px"><span class="f">scrollMark</span>.setLocation(newX, <span class="f">scrollMark</span>.getY());</div>
<div class="ln" style="top:439px;">359</div>
<div class="code" style="left:218.0px;top:439px"><span class="f">scrollMark</span>.setRotation(<span class="f">scrollValue</span>*<span class="n">3.6</span>);</div>
<div class="ln" style="top:461px;color:#a1a3ab;">360</div>
<div class="code" style="left:186.0px;top:461px">} <span class="k">catch</span>(Exception ex){</div>
<div class="ln" style="top:483px;">361</div>
<div class="code" style="left:218.0px;top:483px"><span class="f u">cpsField</span>.setText(String.<span class="i">valueOf</span>(<span class="f">scrollValue</span>));</div>
<div class="ln" style="top:505px;">362</div>
<div class="code" style="left:186.0px;top:505px">}</div>
<div class="ln" style="top:527px;">363</div>
<div class="code" style="left:186.0px;top:527px"><span class="f u">cpsField</span>.setEditable(<span class="k">false</span>);</div>
<div class="ln" style="top:549px;">364</div>
<div class="code" style="left:154.0px;top:549px">});</div>
<div class="ln" style="top:571px;">365</div>
<div class="ln" style="top:593px;">366</div>
<div class="code" style="left:154.0px;top:593px"><span class="f">scrollMark</span>.addMouseMotionListener(<span class="h">(MouseMotionAdapter) mouseDragged(e) → {</span></div>
<svg class="a" style="left:32px;top:594.7px" width="20" height="16" viewBox="0 0 20 16" fill="none"><circle cx="8.500" cy="9" r="5" stroke="#548af7" stroke-width="1.400"/><circle cx="8.500" cy="9" r="2.100" stroke="#548af7" stroke-width="1.400"/><path d="M14.500 10v-7.500M12.300 4.700l2.200-2.300 2.200 2.300" stroke="#e05555" stroke-width="1.200"/></svg>
<svg class="a" style="left:66px;top:596px" width="16" height="16" viewBox="0 0 16 16" fill="none"><path d="M6.600 4.200l4.200 4.200-4.200 4.200" stroke="#868a91" stroke-width="1.100" stroke-linecap="round" stroke-linejoin="round"/></svg>
<div class="ln" style="top:615px;">369</div>
<div class="code" style="left:218.0px;top:615px"><span class="k">int</span> <span class="u">newX</span> = <span class="f">scrollMark</span>.getX() + e.getX() - <span class="f">scrollMark</span>.getWidth()/<span class="n">2</span>;</div>
<div class="ln" style="top:637px;">370</div>
<div class="code" style="left:218.0px;top:637px"><span class="k">int</span> minX = <span class="f">scrollBar</span>.getX();</div>
<div class="ln" style="top:659px;">371</div>
<div class="code" style="left:218.0px;top:659px"><span class="k">int</span> maxX = <span class="f">scrollBar</span>.getX() + <span class="f">scrollBar</span>.getWidth() - <span class="f">scrollMark</span>.getWidth();</div>
<div class="ln" style="top:681px;">372</div>
<div class="code" style="left:218.0px;top:681px"><span class="k">if</span>(<span class="u">newX</span>&lt;minX) <span class="u">newX</span>=minX;</div>
<div class="ln" style="top:703px;">373</div>
<div class="code" style="left:218.0px;top:703px"><span class="k">if</span>(<span class="u">newX</span>&gt;maxX) <span class="u">newX</span>=maxX;</div>
<div class="ln" style="top:725px;">374</div>
<div class="code" style="left:218.0px;top:725px"><span class="f">scrollMark</span>.setLocation(<span class="u">newX</span>, <span class="f">scrollMark</span>.getY());</div>
<div class="ln" style="top:747px;">375</div>
<div class="code" style="left:218.0px;top:747px"><span class="f">scrollValue</span> = (<span class="k">int</span>)(<span class="n">50.0</span>*(<span class="u">newX</span>-minX)/(maxX-minX));</div>
<div class="ln" style="top:769px;">376</div>
<div class="code" style="left:218.0px;top:769px"><span class="f u">cpsField</span>.setText(String.<span class="i">valueOf</span>(<span class="f">scrollValue</span>));</div>
<div class="ln" style="top:791px;">377</div>
<div class="code" style="left:218.0px;top:791px"><span class="f">scrollMark</span>.setRotation(<span class="f">scrollValue</span>*<span class="n">3.6</span>);</div>
<div class="ln" style="top:813px;">378</div>
<div class="code" style="left:154.0px;top:813px"><span class="b">}</span>);</div>
<svg class="a" style="left:66px;top:816px" width="16" height="16" viewBox="0 0 16 16" fill="none"><path d="M6.600 4.200l4.200 4.200-4.200 4.200" stroke="#868a91" stroke-width="1.100" stroke-linecap="round" stroke-linejoin="round"/></svg>
<div class="ln" style="top:835px;">380</div>
<div class="ln" style="top:857px;">381</div>
<div class="code" style="left:154.0px;top:857px"><span class="c">// <span class="w">Arraste</span> da janela</span></div>
<div class="ln" style="top:879px;">382</div>
<div class="code" style="left:154.0px;top:879px">panel.addMouseListener(<span class="h">(MouseAdapter) mousePressed(e) → { </span><span class="f">mouseClickPoint</span> = e.getPoint();<span class="h"> }</span>);</div>
<svg class="a" style="left:32px;top:880.7px" width="20" height="16" viewBox="0 0 20 16" fill="none"><circle cx="8.500" cy="9" r="5" stroke="#548af7" stroke-width="1.400"/><circle cx="8.500" cy="9" r="2.100" stroke="#548af7" stroke-width="1.400"/><path d="M14.500 10v-7.500M12.300 4.700l2.200-2.300 2.200 2.300" stroke="#e05555" stroke-width="1.200"/></svg>
<svg class="a" style="left:66px;top:882px" width="16" height="16" viewBox="0 0 16 16" fill="none"><path d="M6.600 4.200l4.200 4.200-4.200 4.200" stroke="#868a91" stroke-width="1.100" stroke-linecap="round" stroke-linejoin="round"/></svg>
<div class="ln" style="top:901px;">386</div>
<div class="ln" style="top:923px;">387</div>
<div class="code" style="left:154.0px;top:923px">panel.addMouseMotionListener(<span class="h">(MouseMotionAdapter) mouseDragged(e) → {</span></div>
<svg class="a" style="left:32px;top:924.7px" width="20" height="16" viewBox="0 0 20 16" fill="none"><circle cx="8.500" cy="9" r="5" stroke="#548af7" stroke-width="1.400"/><circle cx="8.500" cy="9" r="2.100" stroke="#548af7" stroke-width="1.400"/><path d="M14.500 10v-7.500M12.300 4.700l2.200-2.300 2.200 2.300" stroke="#e05555" stroke-width="1.200"/></svg>
<svg class="a" style="left:66px;top:926px" width="16" height="16" viewBox="0 0 16 16" fill="none"><path d="M6.600 4.200l4.200 4.200-4.200 4.200" stroke="#868a91" stroke-width="1.100" stroke-linecap="round" stroke-linejoin="round"/></svg>
</div>
<svg class="a" style="left:1230px;top:118px" width="374" height="492" viewBox="1230 118 374 492" shape-rendering="crispEdges">
<polygon points="1247,125 1586,125 1586,128 1589,128 1589,131 1592,131 1592,134 1595,134 1595,138 1595,591 1592,591 1592,597 1589,597 1589,600 1586,600 1586,603 1250,603 1250,600 1244,600 1244,597 1241,597 1241,591 1238,591 1238,138 1241,138 1241,132 1244,132 1244,128 1247,128" fill="#000" />
<polygon points="1250,129 1585,129 1585,132 1588,132 1588,135 1589,135 1589,588 1586,588 1586,594 1583,594 1583,597 1250,597 1250,594 1247,594 1247,588 1244,588 1244,138 1247,138 1247,133 1250,133" fill="#404040" />
<clipPath id="inn"><polygon points="1250,129 1585,129 1585,132 1588,132 1588,135 1589,135 1589,588 1586,588 1586,594 1583,594 1583,597 1250,597 1250,594 1247,594 1247,588 1244,588 1244,138 1247,138 1247,133 1250,133" fill="#000" /></clipPath>
<g clip-path="url(#inn)">
<polygon points="1239.7,544.3 1247.6,528.6 1271.2,520.8 1412.6,522.7 1420.5,544.3 1432.3,571.8 1444,575.8 1459.8,564 1499,556.1 1530.5,544.3 1561.9,560.1 1577.6,528.6 1589.4,505 1593.4,610 1239.7,610" fill="#2e4526" />
<polygon points="1243.6,544.3 1245.6,512.9 1251.5,497.2 1261.3,485.4 1266.4,475.6 1270.4,485.4 1273.1,505 1275.1,528.6 1271.2,544.3" fill="#2e4526" />
<polygon points="1312.4,522.7 1314.4,497.2 1322.2,487.4 1334,481.5 1341.9,489.3 1341.9,522.7" fill="#2e4526" />
<polygon points="1275.1,522.7 1279,501.1 1286.9,495.2 1302.6,497.2 1302.6,522.7" fill="#2e4526" />
<polygon points="1357.6,522.7 1359.6,505 1370.2,489.3 1379.2,505 1381.2,522.7" fill="#2e4526" />
<polygon points="1393,528.6 1396.9,516.8 1405.5,505 1411,520.8 1412.6,544.3 1393,544.3" fill="#2e4526" />
<polygon points="1382.7,450 1385.9,450 1385.9,485.4 1382.7,485.4" fill="#2e4526" opacity=".8"/>
<polygon points="1385.1,461.8 1388.2,461.8 1388.2,501.1 1385.1,501.1" fill="#2e4526" opacity=".8"/>
<polygon points="1417.3,481.5 1420.5,481.5 1420.5,509 1417.3,509" fill="#2e4526" opacity=".8"/>
<polygon points="1263.3,475.6 1267.2,475.6 1267.2,489.3 1263.3,489.3" fill="#2e4526" opacity=".8"/>
<polygon points="1571.3,450 1574.5,450 1574.5,481.5 1571.3,481.5" fill="#2e4526" opacity=".8"/>
<polygon points="1576.1,461.8 1580,461.8 1580,505 1576.1,505" fill="#2e4526" opacity=".8"/>
<polygon points="1582.3,442.2 1585.5,442.2 1585.5,473.6 1582.3,473.6" fill="#2e4526" opacity=".8"/>
<polygon points="1584.7,469.7 1588.6,469.7 1588.6,512.9 1584.7,512.9" fill="#2e4526" opacity=".8"/>
<polygon points="1565.1,489.3 1569.8,489.3 1569.8,528.6 1565.1,528.6" fill="#2e4526" opacity=".8"/>
<polygon points="1561.9,560.1 1565.8,520.8 1573.7,501.1 1579.6,485.4 1587.5,465.8 1593.4,505 1593.4,567.9" fill="#2e4526" />
<polygon points="1302.6,522.7 1318.3,522.7 1316.7,544.3 1304.6,544.3" fill="#404040" opacity=".9"/>
<polygon points="1341.9,522.7 1357.6,522.7 1355.6,540.4 1344.2,540.4" fill="#404040" opacity=".9"/>
<polygon points="1381.2,522.7 1393,522.7 1392.2,544.3 1382.7,544.3" fill="#404040" opacity=".9"/>
<polygon points="1249.1,532.6 1253.9,532.6 1253.1,564 1249.1,564" fill="#404040" opacity=".9"/>
<polygon points="1412.6,522.7 1428.3,522.7 1444,575.8 1432.3,571.8" fill="#404040" opacity=".9"/>
<polygon points="1282.9,544.3 1290.8,544.3 1288.8,560.1 1283.7,560.1" fill="#404040" opacity=".9"/>
<polygon points="1328.1,544.3 1336,544.3 1334.8,564 1329.3,564" fill="#404040" opacity=".9"/>
</g>
<rect x="1244" y="198" width="345" height="6" fill="#000" />
<polygon points="1258.5,144 1265.3,144 1298.4,181 1298.4,185.5 1292.2,185.5 1258.5,150.1" fill="#808080" />
<polygon points="1321.9,141.2 1327.5,141.2 1327.5,146.2 1324.2,146.2 1324.2,151.8 1316.3,151.8 1316.3,147.3 1321.9,147.3" fill="#808080" />
<polygon points="1316.3,175.4 1327.5,175.4 1327.5,191.7 1319.7,191.7 1316.3,186.6" fill="#808080" />
<polygon points="1357.8,144 1364,144 1364,148.4 1357.8,148.4" fill="#808080" />
<polygon points="1343.3,175.4 1354.5,175.4 1354.5,182.1 1348.9,191.7 1339.9,191.7 1339.9,183.2" fill="#808080" />
<polygon points="1359,154.1 1362.9,154.1 1362.9,173.1 1359,173.1" fill="#808080" />
<polygon points="1375.8,148.4 1397.1,148.4 1402.7,159.7 1402.7,175.4 1375.8,175.4" fill="#808080" />
<polygon points="1384.8,179.9 1418.5,179.9 1418.5,191.7 1406.1,191.7 1401.6,185.5 1393.8,191.7 1384.8,191.7" fill="#808080" />
<polygon points="1410,179.9 1417.9,183.2 1417.9,188.9 1414.5,191.7 1410,191.7" fill="#808080" />
<polygon points="1442,144 1451,144 1451,154.1 1439.2,157.4 1439.2,152.9 1442,152.9" fill="#808080" />
<polygon points="1454.3,179.9 1465.6,179.9 1465.6,188.9 1462.7,191.7 1457.1,191.7 1457.1,184.4 1454.3,184.4" fill="#808080" />
<polygon points="1477.3,147.3 1481.8,147.3 1496.4,154.1 1496.4,163 1493.1,163 1493.1,157.4 1477.3,151.8" fill="#808080" />
<polygon points="1484.1,179.9 1505.4,179.9 1502,188.9 1502,191.7 1484.1,191.7" fill="#808080" />
<polygon points="1505.4,152.9 1513.3,147.3 1520,147.3 1520,154.1 1511,157.4 1505.4,157.4" fill="#808080" />
<polygon points="1514.4,179.9 1529,179.9 1529,185.5 1526.7,188.9 1521.1,188.9 1514.4,182.1" fill="#808080" />
<polygon points="1544.1,150.1 1552.5,150.1 1567.1,170.9 1577.2,177.6 1577.2,188.9 1573.9,191.7 1559.3,191.7 1555.9,186.6 1555.9,178.7 1544.1,158.5" fill="#808080" />
<text transform="matrix(0.5200 0 0 0.4406 1289.72 178.00)" font-family="Liberation Sans, sans-serif" font-weight="bold" font-size="100" fill="#000" stroke="#000" stroke-width="8.4" stroke-linejoin="round" shape-rendering="auto">M</text>
<text transform="matrix(0.4746 0 0 0.4406 1338.63 178.00)" font-family="Liberation Sans, sans-serif" font-weight="bold" font-size="100" fill="#000" stroke="#000" stroke-width="8.7" stroke-linejoin="round" shape-rendering="auto">T</text>
<text transform="matrix(0.4619 0 0 0.3982 1373.15 178.10)" font-family="Liberation Sans, sans-serif" font-weight="bold" font-size="100" fill="#000" stroke="#000" stroke-width="9.3" stroke-linejoin="round" shape-rendering="auto">c</text>
<text transform="matrix(0.5556 0 0 0.4138 1403.11 178.00)" font-family="Liberation Sans, sans-serif" font-weight="bold" font-size="100" fill="#000" stroke="#000" stroke-width="8.3" stroke-linejoin="round" shape-rendering="auto">l</text>
<text transform="matrix(0.5778 0 0 0.4138 1418.06 178.00)" font-family="Liberation Sans, sans-serif" font-weight="bold" font-size="100" fill="#000" stroke="#000" stroke-width="8.2" stroke-linejoin="round" shape-rendering="auto">i</text>
<text transform="matrix(0.4495 0 0 0.3982 1437.10 178.10)" font-family="Liberation Sans, sans-serif" font-weight="bold" font-size="100" fill="#000" stroke="#000" stroke-width="9.5" stroke-linejoin="round" shape-rendering="auto">c</text>
<text transform="matrix(0.4619 0 0 0.4138 1465.97 178.00)" font-family="Liberation Sans, sans-serif" font-weight="bold" font-size="100" fill="#000" stroke="#000" stroke-width="9.1" stroke-linejoin="round" shape-rendering="auto">k</text>
<text transform="matrix(0.4542 0 0 0.3982 1497.18 178.10)" font-family="Liberation Sans, sans-serif" font-weight="bold" font-size="100" fill="#000" stroke="#000" stroke-width="9.4" stroke-linejoin="round" shape-rendering="auto">e</text>
<text transform="matrix(0.5226 0 0 0.3963 1525.30 178.00)" font-family="Liberation Sans, sans-serif" font-weight="bold" font-size="100" fill="#000" stroke="#000" stroke-width="8.8" stroke-linejoin="round" shape-rendering="auto">r</text>
<polygon points="1343.3,243 1352,243 1352,248.5 1388,248.5 1388,254.7 1390.5,254.7 1390.5,275.2 1396.7,275.2 1405.4,275.2 1405.4,280.2 1396.7,290.1 1396.7,300 1376.8,300 1373.1,292.6 1373.1,287.6 1376.8,278.9 1379.3,278.9 1379.3,254.7 1352,254.7 1352,254.1 1343.3,254.1" fill="#808080" />
<polygon points="1322.3,249.2 1334,249.2 1334,260.3 1322.3,260.3" fill="#808080" />
<polygon points="1295,287.6 1301.2,287.6 1301.2,278.9 1316.1,278.9 1316.1,274 1333.4,274 1333.4,283.9 1321,283.9 1321,287.6 1304.9,293.8 1295,293.8" fill="#808080" />
<polygon points="1328.5,292.6 1343.3,282.7 1344.6,272.7 1354.5,272.7 1354.5,281.4 1343.3,291.3 1330.9,296.9 1328.5,296.9" fill="#808080" />
<polygon points="1308.6,291.3 1322.3,291.3 1322.3,300 1308.6,300" fill="#808080" />
<polygon points="1301.2,312.4 1321,312.4 1321,341 1301.2,341" fill="#808080" />
<polygon points="1295,324.8 1301.2,319.9 1301.2,334.8 1295,334.8" fill="#808080" />
<polygon points="1322.3,317.4 1330.9,317.4 1339.6,334.8 1330.9,334.8" fill="#808080" />
<polygon points="1295,307.5 1303.6,307.5 1303.6,312.4 1295,312.4" fill="#808080" />
<polygon points="1343.3,317.4 1352,317.4 1364.4,327.3 1388,310 1388,322.4 1375.6,333.5 1376.8,341 1366.9,341 1364.4,337.3 1354.5,344.7 1348.3,341 1357,333.5 1343.3,324.8" fill="#808080" />
<polygon points="1384.3,305 1389.3,305 1389.3,312.4 1384.3,312.4" fill="#808080" />
<rect x="1268" y="210" width="6" height="33" fill="#000" />
<rect x="1454" y="210" width="6" height="33" fill="#000" />
<rect x="1274" y="225" width="180" height="3" fill="#000" />
<rect x="1360.7" y="213" width="3.3" height="3.3" fill="#fff" />
<rect x="1358" y="216.3" width="3.3" height="9.5" fill="#fff" />
<rect x="1361" y="219.6" width="3.6" height="6.2" fill="#fff" />
<rect x="1364.6" y="218.5" width="8.4" height="3.9" fill="#fff" />
<rect x="1367.5" y="221.9" width="8.9" height="3.4" fill="#fff" />
<rect x="1358" y="222.4" width="9.5" height="6.8" fill="#fff" />
<rect x="1352" y="227.5" width="8.7" height="3.4" fill="#fff" />
<rect x="1355" y="230.3" width="8" height="3.4" fill="#fff" />
<rect x="1364" y="228" width="6.3" height="9" fill="#fff" />
<rect x="1363.6" y="237" width="3.4" height="3.2" fill="#fff" />
<rect x="1470.8" y="224" width="51.400" height="58.700" rx="24" ry="27" fill="#000" shape-rendering="auto"/>
<ellipse cx="1496.5" cy="253.500" rx="4.700" ry="14.500" fill="#404040" shape-rendering="auto"/>
<rect x="1528.8" y="224" width="51.400" height="58.700" rx="24" ry="27" fill="#000" shape-rendering="auto"/>
<ellipse cx="1554.5" cy="253.500" rx="4.700" ry="14.500" fill="#404040" shape-rendering="auto"/>
<rect x="1271" y="255" width="25" height="29" fill="#000" />
<rect x="1274" y="258" width="19" height="20" fill="#2b2b2b" />
<rect x="1274" y="279" width="19" height="2" fill="#2b2b2b" />
<text x="1275.8" y="271.3" text-anchor="start" textLength="14" lengthAdjust="spacingAndGlyphs" font-family="Liberation Sans, sans-serif" font-weight="bold" font-size="11.5" fill="#fff" stroke="#fff" stroke-width="0.9" stroke-linejoin="round" shape-rendering="auto">25</text>
<text x="1300" y="271.5" text-anchor="start" textLength="114.5" lengthAdjust="spacing" font-family="Liberation Sans, sans-serif" font-weight="bold" font-size="16" fill="#000" stroke="#000" stroke-width="2.6" stroke-linejoin="round" shape-rendering="auto">CPS Range</text>
<polygon points="1274,295 1292,295 1292,298 1295,298 1295,319 1292,319 1292,322 1274,322 1274,319 1271,319 1271,298 1274,298" fill="#000" /><rect x="1274" y="298" width="18" height="21" fill="#2b2b2b" />
<polygon points="1274,307 1280,307 1280,310 1286,310 1286,304 1289,304 1289,301 1292,301 1292,307 1289,307 1289,313 1286,313 1286,316 1283,316 1283,319 1277,319 1277,316 1274,316" fill="#1ca803" />
<text x="1300" y="311.7" text-anchor="start" textLength="84.5" lengthAdjust="spacing" font-family="Liberation Sans, sans-serif" font-weight="bold" font-size="16" fill="#000" stroke="#000" stroke-width="2.6" stroke-linejoin="round" shape-rendering="auto">Overlay</text>
<polygon points="1274,335 1292,335 1292,338 1295,338 1295,359 1292,359 1292,362 1274,362 1274,359 1271,359 1271,338 1274,338" fill="#000" /><rect x="1274" y="338" width="18" height="21" fill="#2b2b2b" />
<text x="1300" y="351.5" text-anchor="start" textLength="111.5" lengthAdjust="spacing" font-family="Liberation Sans, sans-serif" font-weight="bold" font-size="16" fill="#000" stroke="#000" stroke-width="2.6" stroke-linejoin="round" shape-rendering="auto">Right click</text>
<rect x="1307" y="365" width="39" height="3" fill="#000" /><rect x="1301" y="368" width="51" height="3" fill="#000" /><rect x="1295" y="371" width="63" height="3" fill="#000" /><rect x="1292" y="374" width="69" height="3" fill="#000" /><rect x="1286" y="377" width="81" height="3" fill="#000" /><rect x="1283" y="380" width="87" height="6" fill="#000" /><rect x="1280" y="386" width="93" height="3" fill="#000" /><rect x="1277" y="389" width="99" height="3" fill="#000" /><rect x="1274" y="392" width="105" height="6" fill="#000" /><rect x="1271" y="398" width="111" height="12" fill="#000" /><rect x="1268" y="410" width="117" height="24" fill="#000" /><rect x="1271" y="434" width="111" height="12" fill="#000" /><rect x="1274" y="446" width="105" height="6" fill="#000" /><rect x="1277" y="452" width="99" height="3" fill="#000" /><rect x="1280" y="455" width="93" height="3" fill="#000" /><rect x="1283" y="458" width="87" height="6" fill="#000" /><rect x="1286" y="464" width="81" height="3" fill="#000" /><rect x="1292" y="467" width="69" height="3" fill="#000" /><rect x="1295" y="470" width="63" height="3" fill="#000" /><rect x="1301" y="473" width="51" height="3" fill="#000" /><rect x="1307" y="476" width="39" height="3" fill="#000" />
<rect x="1310" y="377" width="33" height="3" fill="#925674" /><rect x="1304" y="380" width="45" height="3" fill="#925674" /><rect x="1298" y="383" width="57" height="3" fill="#925674" /><rect x="1295" y="386" width="63" height="3" fill="#925674" /><rect x="1292" y="389" width="69" height="3" fill="#925674" /><rect x="1289" y="392" width="75" height="6" fill="#925674" /><rect x="1286" y="398" width="81" height="3" fill="#925674" /><rect x="1283" y="401" width="87" height="9" fill="#925674" /><rect x="1280" y="410" width="93" height="24" fill="#925674" /><rect x="1283" y="434" width="87" height="9" fill="#925674" /><rect x="1286" y="443" width="81" height="3" fill="#925674" /><rect x="1289" y="446" width="75" height="6" fill="#925674" /><rect x="1292" y="452" width="69" height="3" fill="#925674" /><rect x="1295" y="455" width="63" height="3" fill="#925674" /><rect x="1298" y="458" width="57" height="3" fill="#925674" /><rect x="1304" y="461" width="45" height="3" fill="#925674" /><rect x="1310" y="464" width="33" height="3" fill="#925674" />
<rect x="1313" y="399" width="27" height="3" fill="#6b2047" /><rect x="1310" y="402" width="33" height="3" fill="#6b2047" /><rect x="1307" y="405" width="39" height="3" fill="#6b2047" /><rect x="1304" y="408" width="45" height="6" fill="#6b2047" /><rect x="1301" y="414" width="51" height="18" fill="#6b2047" /><rect x="1304" y="432" width="45" height="6" fill="#6b2047" /><rect x="1307" y="438" width="39" height="3" fill="#6b2047" /><rect x="1310" y="441" width="33" height="3" fill="#6b2047" /><rect x="1313" y="444" width="27" height="3" fill="#6b2047" />
<rect x="1316" y="405" width="21" height="3" fill="#925674" /><rect x="1313" y="408" width="27" height="3" fill="#925674" /><rect x="1310" y="411" width="33" height="3" fill="#925674" /><rect x="1307" y="414" width="39" height="18" fill="#925674" /><rect x="1310" y="432" width="33" height="3" fill="#925674" /><rect x="1313" y="435" width="27" height="3" fill="#925674" /><rect x="1316" y="438" width="21" height="3" fill="#925674" />
<rect x="1322" y="389" width="9" height="33" fill="#6b2047" />
<polygon points="1274,495 1340,495 1340,498 1343,498 1343,519 1340,519 1340,522 1274,522 1274,519 1271,519 1271,498 1274,498" fill="#000" />
<rect x="1274" y="498" width="66" height="21" fill="#2b2b2b" />
<text x="1282" y="514.5" text-anchor="start" textLength="21" lengthAdjust="spacing" font-family="Liberation Sans, sans-serif" font-weight="bold" font-size="14" fill="#fff" stroke="#fff" stroke-width="1.5" stroke-linejoin="round" shape-rendering="auto">F7</text>
<text x="1350" y="504.5" text-anchor="start" textLength="60" lengthAdjust="spacing" font-family="Liberation Sans, sans-serif" font-weight="bold" font-size="12.5" fill="#000" stroke="#000" stroke-width="2.1" stroke-linejoin="round" shape-rendering="auto">Toggle</text>
<text x="1350" y="519.8" text-anchor="start" textLength="60" lengthAdjust="spacing" font-family="Liberation Sans, sans-serif" font-weight="bold" font-size="12.5" fill="#000" stroke="#000" stroke-width="2.1" stroke-linejoin="round" shape-rendering="auto">button</text>
<rect x="1283" y="537" width="6" height="45" fill="#000" />
<rect x="1307" y="537" width="6" height="45" fill="#000" />
<rect x="1289" y="540" width="6" height="6" fill="#000" />
<rect x="1295" y="546" width="6" height="6" fill="#000" />
<rect x="1301" y="537" width="6" height="9" fill="#000" />
<rect x="1316" y="537" width="21" height="6" fill="#000" />
<rect x="1323" y="537" width="6" height="45" fill="#000" />
<rect x="1337" y="537" width="6" height="45" fill="#000" />
<rect x="1354" y="537" width="6" height="45" fill="#000" />
<rect x="1343" y="554" width="11" height="6" fill="#000" />
<rect x="1364" y="537" width="6" height="6" fill="#000" />
<rect x="1385" y="537" width="6" height="6" fill="#000" />
<rect x="1367" y="543" width="6" height="6" fill="#000" />
<rect x="1382" y="543" width="6" height="6" fill="#000" />
<rect x="1370" y="549" width="6" height="6" fill="#000" />
<rect x="1379" y="549" width="6" height="6" fill="#000" />
<rect x="1373" y="555" width="9" height="9" fill="#000" />
<rect x="1370" y="564" width="6" height="6" fill="#000" />
<rect x="1379" y="564" width="6" height="6" fill="#000" />
<rect x="1367" y="570" width="6" height="6" fill="#000" />
<rect x="1382" y="570" width="6" height="6" fill="#000" />
<rect x="1364" y="576" width="6" height="6" fill="#000" />
<rect x="1385" y="576" width="6" height="6" fill="#000" />
<polygon points="1451.2,549.5 1477.6,549.5 1477.6,554.9 1475.3,561.1 1472.1,567.3 1448.1,567.3 1448.1,561.1 1451.2,554.9" fill="#000" stroke="#000" stroke-width="6" stroke-linejoin="miter"/>
<polygon points="1517.1,549.5 1544.3,549.5 1544.3,554.9 1541.2,561.1 1538.1,567.3 1514,567.3 1514,561.1 1517.1,554.9" fill="#000" stroke="#000" stroke-width="6" stroke-linejoin="miter"/>
<polygon points="1451.2,501.4 1523.4,501.4 1523.4,513.8 1535,519.2 1541.2,530.9 1552.8,530.9 1552.8,543.3 1547.4,549.5 1508.6,549.5 1497,535.5 1483.8,549.5 1445,549.5 1445,513.8 1451.2,513.8" fill="#000" stroke="#000" stroke-width="6" stroke-linejoin="miter"/>
<polygon points="1433.4,519.2 1445,519.2 1445,530.9 1438.8,530.9 1438.8,524.6 1433.4,524.6" fill="#000" stroke="#000" stroke-width="6" stroke-linejoin="miter"/>
<polygon points="1535,519.2 1565.2,519.2 1565.2,530.9 1541.2,530.9 1541.2,524.6 1535,524.6" fill="#000" stroke="#000" stroke-width="6" stroke-linejoin="miter"/>
<polygon points="1462.8,453.3 1480.7,453.3 1480.7,459.5 1475.3,459.5 1475.3,471.1 1469,471.1 1469,495.2 1480.7,495.2 1480.7,501.4 1451.2,501.4 1451.2,513.8 1445,513.8 1445,519.2 1433.4,519.2 1433.4,495.2 1438.8,495.2 1438.8,489.7 1445,483.5 1445,477.3 1451.2,474.2 1451.2,464.9 1456.6,464.9 1456.6,459.5 1462.8,459.5" fill="#000" stroke="#000" stroke-width="6" stroke-linejoin="miter"/>
<polygon points="1505.5,453.3 1547.4,453.3 1547.4,464.9 1552.8,464.9 1552.8,475 1559,475 1559,484.3 1562.1,484.3 1562.1,489.7 1565.2,489.7 1570.7,495.2 1570.7,519.2 1535,519.2 1528.8,519.2 1528.8,513.8 1523.4,513.8 1523.4,501.4 1505.5,501.4 1505.5,495.2 1517.1,495.2 1517.1,471.1 1510.9,471.1 1510.9,459.5 1505.5,459.5" fill="#000" stroke="#000" stroke-width="6" stroke-linejoin="miter"/>
<polygon points="1439,324 1451,324 1451,330 1463,330 1463,318 1475,318 1475,324 1481,324 1481,312 1493,312 1493,318 1511,318 1511,309 1529,309 1529,315 1523,315 1523,321 1517,321 1517,327 1529,327 1529,321 1541,321 1541,327 1535,327 1535,333 1559,333 1559,339 1553,339 1553,345 1565,345 1565,339 1577,339 1577,333 1583,333 1583,345 1571,345 1571,363 1577,363 1577,369 1571,369 1571,375 1577,375 1577,381 1583,381 1583,387 1589,387 1589,393 1571,393 1571,399 1577,399 1577,405 1583,405 1583,417 1568,417 1568,429 1565,429 1565,435 1562,435 1562,447 1559,447 1559,459 1541,459 1541,453 1463,453 1463,459 1439,459 1439,447 1433,447 1433,438 1424,438 1424,429 1433,429 1433,420 1418,420 1418,408 1427,408 1427,402 1409,402 1409,393 1415,393 1415,387 1421,387 1421,381 1427,381 1427,375 1421,375 1421,363 1427,363 1427,354 1433,354 1433,348 1439,348 1439,342 1445,342 1445,330 1439,330" fill="#000" stroke="#000" stroke-width="6" stroke-linejoin="miter"/>
<rect x="1469" y="453.3" width="48.1" height="48.1" fill="#000" />
<polygon points="1451.2,501.4 1523.4,501.4 1523.4,513.8 1535,519.2 1541.2,530.9 1552.8,530.9 1552.8,543.3 1547.4,549.5 1508.6,549.5 1497,535.5 1483.8,549.5 1445,549.5 1445,513.8 1451.2,513.8" fill="#000" />
<polygon points="1445,513.8 1451.2,513.8 1451.2,507.6 1456.6,507.6 1456.6,537.1 1445,537.1" fill="#46442d" />
<polygon points="1462.8,513.8 1469,513.8 1469,519.2 1475.3,519.2 1475.3,537.1 1462.8,537.1" fill="#46442d" />
<polygon points="1480.7,513.8 1486.9,513.8 1486.9,537.1 1480.7,537.1" fill="#46442d" />
<polygon points="1505.5,507.6 1517.1,507.6 1517.1,537.1 1510.9,537.1 1510.9,530.9 1505.5,530.9" fill="#46442d" />
<polygon points="1523.4,513.8 1528.8,513.8 1528.8,519.2 1535,519.2 1535,537.1 1523.4,537.1" fill="#46442d" />
<polygon points="1541.2,530.9 1547.4,530.9 1547.4,537.1 1541.2,537.1" fill="#46442d" />
<polygon points="1451.2,549.5 1477.6,549.5 1477.6,554.9 1475.3,561.1 1472.1,567.3 1448.1,567.3 1448.1,561.1 1451.2,554.9" fill="#46442d" />
<polygon points="1517.1,549.5 1544.3,549.5 1544.3,554.9 1541.2,561.1 1538.1,567.3 1514,567.3 1514,561.1 1517.1,554.9" fill="#46442d" />
<rect x="1451.2" y="554.9" width="24" height="6.2" fill="#fff" />
<rect x="1517.1" y="554.9" width="24" height="6.2" fill="#fff" />
<polygon points="1462.8,453.3 1480.7,453.3 1480.7,459.5 1475.3,459.5 1475.3,471.1 1469,471.1 1469,495.2 1480.7,495.2 1480.7,501.4 1451.2,501.4 1451.2,513.8 1445,513.8 1445,519.2 1433.4,519.2 1433.4,495.2 1438.8,495.2 1438.8,489.7 1445,483.5 1445,477.3 1451.2,474.2 1451.2,464.9 1456.6,464.9 1456.6,459.5 1462.8,459.5" fill="#e6d5c5" />
<polygon points="1505.5,453.3 1547.4,453.3 1547.4,464.9 1552.8,464.9 1552.8,475 1559,475 1559,484.3 1562.1,484.3 1562.1,489.7 1565.2,489.7 1570.7,495.2 1570.7,519.2 1535,519.2 1528.8,519.2 1528.8,513.8 1523.4,513.8 1523.4,501.4 1505.5,501.4 1505.5,495.2 1517.1,495.2 1517.1,471.1 1510.9,471.1 1510.9,459.5 1505.5,459.5" fill="#e6d5c5" />
<rect x="1475.3" y="483.5" width="5.4" height="5.4" fill="#e6d5c5" />
<rect x="1433.4" y="519.2" width="11.6" height="5.4" fill="#e09b5e" />
<rect x="1438.8" y="524.6" width="6.2" height="6.2" fill="#f7d28f" />
<rect x="1535" y="519.2" width="30.3" height="5.4" fill="#e09b5e" />
<rect x="1541.2" y="524.6" width="24" height="6.2" fill="#f7d28f" />
<rect x="1480.7" y="453.3" width="24.8" height="6.2" fill="#e09b5e" />
<rect x="1480.7" y="459.5" width="24.8" height="29.5" fill="#f7d28f" />
<rect x="1486.9" y="464.9" width="12.4" height="6.2" fill="#e09b5e" />
<rect x="1480.7" y="471.1" width="6.2" height="6.2" fill="#e09b5e" />
<rect x="1499.3" y="471.1" width="6.2" height="6.2" fill="#e09b5e" />
<rect x="1486.9" y="477.3" width="12.4" height="6.2" fill="#e09b5e" />
<rect x="1486.9" y="489" width="12.4" height="6.2" fill="#e09b5e" />
<rect x="1486.9" y="495.2" width="12.4" height="6.2" fill="#f9b21a" />
<rect x="1480.7" y="495.2" width="6.2" height="6.2" fill="#4a4a4a" />
<rect x="1499.3" y="495.2" width="6.2" height="6.2" fill="#4a4a4a" />
<polygon points="1439,324 1451,324 1451,330 1463,330 1463,318 1475,318 1475,324 1481,324 1481,312 1493,312 1493,318 1511,318 1511,309 1529,309 1529,315 1523,315 1523,321 1517,321 1517,327 1529,327 1529,321 1541,321 1541,327 1535,327 1535,333 1559,333 1559,339 1553,339 1553,345 1565,345 1565,339 1577,339 1577,333 1583,333 1583,345 1571,345 1571,363 1577,363 1577,369 1571,369 1571,375 1577,375 1577,381 1583,381 1583,387 1589,387 1589,393 1571,393 1571,399 1577,399 1577,405 1583,405 1583,417 1568,417 1568,429 1565,429 1565,435 1562,435 1562,447 1559,447 1559,459 1541,459 1541,453 1463,453 1463,459 1439,459 1439,447 1433,447 1433,438 1424,438 1424,429 1433,429 1433,420 1418,420 1418,408 1427,408 1427,402 1409,402 1409,393 1415,393 1415,387 1421,387 1421,381 1427,381 1427,375 1421,375 1421,363 1427,363 1427,354 1433,354 1433,348 1439,348 1439,342 1445,342 1445,330 1439,330" fill="#e6d5c5" />
<polygon points="1433.4,362.8 1456.6,362.8 1456.6,357.4 1475.3,357.4 1475.3,375.3 1451.2,375.3 1451.2,380.7 1438.8,380.7 1438.8,375.3 1433.4,375.3" fill="#b59f7f" />
<polygon points="1499.3,357.4 1510.9,357.4 1510.9,369 1523.4,369 1523.4,375.3 1499.3,375.3" fill="#b59f7f" />
<polygon points="1547.4,362.8 1552.8,362.8 1552.8,369 1559,369 1559,375.3 1565.2,375.3 1565.2,380.7 1571.5,380.7 1571.5,386.9 1576.9,386.9 1576.9,399.3 1583.1,405.5 1583.1,416.4 1565.2,416.4 1565.2,436.2 1562.1,436.2 1562.1,447.1 1559,447.1 1559,458.7 1541.2,458.7 1541.2,453.3 1520.2,453.3 1520.2,447.1 1541.2,447.1 1541.2,410.9 1547.4,410.9 1547.4,416.4 1552.8,416.4 1552.8,386.9 1547.4,386.9" fill="#b59f7f" />
<polygon points="1420.9,393.1 1427.2,393.1 1427.2,386.9 1438.8,386.9 1438.8,439.3 1445,439.3 1445,447.1 1456.6,447.1 1456.6,453.3 1462.8,453.3 1462.8,458.7 1438.8,458.7 1438.8,447.1 1433.4,447.1 1433.4,435 1420.9,435 1420.9,428.8 1433.4,428.8 1433.4,416.4 1415.5,416.4 1415.5,410.9 1420.9,410.9 1420.9,405.5 1427.2,405.5 1427.2,399.3 1420.9,399.3" fill="#b59f7f" />
<rect x="1438.8" y="380.7" width="36.5" height="54.3" fill="#f7d28f" />
<rect x="1451.2" y="375.3" width="24" height="5.4" fill="#f7d28f" />
<rect x="1475.3" y="399.3" width="24" height="35.7" fill="#f7d28f" />
<rect x="1499.3" y="375.3" width="24" height="59.7" fill="#f7d28f" />
<rect x="1523.4" y="399.3" width="17.8" height="35.7" fill="#f7d28f" />
<rect x="1547.4" y="416.4" width="11.6" height="18.6" fill="#f7d28f" />
<rect x="1438.8" y="435" width="102.4" height="4.3" fill="#f7d28f" />
<rect x="1445" y="439.3" width="96.2" height="7.8" fill="#f7d28f" />
<rect x="1456.6" y="447.1" width="63.6" height="6.2" fill="#f7d28f" />
<polygon points="1475.3,375.3 1499.3,375.3 1499.3,386.9 1493.1,386.9 1493.1,393.1 1480.7,393.1 1480.7,399.3 1475.3,399.3" fill="#e6d5c5" />
<polygon points="1493.1,386.9 1499.3,386.9 1499.3,393.1 1493.1,399.3 1493.1,416.4 1486.9,416.4 1486.9,410.9 1480.7,410.9 1480.7,405.5 1475.3,405.5 1475.3,399.3 1480.7,399.3 1480.7,393.1 1493.1,393.1" fill="#b59f7f" />
<polygon points="1523.4,375.3 1528.8,375.3 1528.8,399.3 1523.4,399.3" fill="#e6d5c5" />
<polygon points="1528.8,399.3 1535,399.3 1535,410.9 1528.8,410.9" fill="#e6d5c5" />
<rect x="1438.8" y="380.7" width="36.5" height="6.2" fill="#e09b5e" />
<rect x="1499.3" y="380.7" width="17.8" height="6.2" fill="#e09b5e" />
<rect x="1438.8" y="393.1" width="17.8" height="6.2" fill="#e09b5e" />
<rect x="1456.6" y="399.3" width="6.2" height="6.2" fill="#e09b5e" />
<rect x="1438.8" y="405.5" width="17.8" height="5.4" fill="#e09b5e" />
<rect x="1474.9" y="428.8" width="24.4" height="6.2" fill="#e09b5e" />
<rect x="1438.8" y="435" width="24" height="6.2" fill="#e09b5e" />
<rect x="1457.4" y="405.5" width="17.5" height="23.3" fill="#69204a" />
<rect x="1457.4" y="428.8" width="17.5" height="6.2" fill="#8f3a6b" />
<rect x="1499.3" y="405.5" width="17.8" height="23.3" fill="#69204a" />
<rect x="1499.3" y="428.8" width="17.8" height="6.2" fill="#8f3a6b" />
<rect x="1517.1" y="320.9" width="11.6" height="6.2" fill="#000" />
<rect x="1523.4" y="315.1" width="5.4" height="5.9" fill="#000" />
<rect x="1475.3" y="317.8" width="11.6" height="6.2" fill="#000" />
<rect x="1451.2" y="325.6" width="17.8" height="4.7" fill="#000" />
<rect x="1552.8" y="338.8" width="9.3" height="6.2" fill="#000" />
<rect x="1420.9" y="375.3" width="6.2" height="5.4" fill="#000" />
<rect x="1571.5" y="369" width="5.4" height="6.2" fill="#000" />
<rect x="1438.8" y="330.3" width="6.2" height="11.6" fill="#000" />
<rect x="1445" y="453.3" width="6.2" height="6.2" fill="#000" />
<rect x="1451.2" y="459.5" width="5.4" height="5.4" fill="#000" />
<rect x="1547.4" y="453.3" width="5.4" height="11.6" fill="#000" />
</svg>
<svg class="a" style="left:0;top:0" width="170" height="85" viewBox="0 0 170 85" shape-rendering="crispEdges">
<polygon points="16,5 150,5 150,8 153,8 153,11 156,11 156,69 153,69 153,72 150,72 150,75 16,75 16,72 13,72 13,69 10,69 10,11 13,11 13,8 16,8" fill="#000" opacity=".55"/>
<polygon points="16,8 150,8 150,11 153,11 153,69 150,69 150,72 16,72 16,69 13,69 13,11 16,11" fill="#202020" opacity=".6"/>
<polygon points="13,40 20,30 24,44 40,24 50,40 62,22 70,40 84,26 96,44 110,30 124,46 138,34 150,44 153,48 153,69 150,69 150,72 16,72 16,69 13,69" fill="#425a34" opacity=".32"/>
<text x="17" y="22.3" textLength="84" lengthAdjust="spacing" font-family="Liberation Sans, sans-serif" font-weight="bold" font-size="11.500" fill="#fff" stroke="#fff" stroke-width="1.100" stroke-linejoin="round" shape-rendering="auto">POWER: OFF</text>
<text x="17" y="42" textLength="45" lengthAdjust="spacing" font-family="Liberation Sans, sans-serif" font-weight="bold" font-size="11.500" fill="#fff" stroke="#fff" stroke-width="1.100" stroke-linejoin="round" shape-rendering="auto">CPS: 0</text>
<text x="17" y="62" textLength="80.5" lengthAdjust="spacing" font-family="Liberation Sans, sans-serif" font-weight="bold" font-size="11.500" fill="#fff" stroke="#fff" stroke-width="1.100" stroke-linejoin="round" shape-rendering="auto">TOGGLE: F7</text>
</svg>
</body></html>
